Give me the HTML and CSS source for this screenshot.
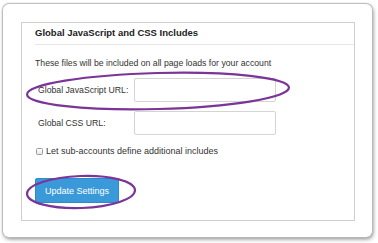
FILE: index.html
```html
<!DOCTYPE html>
<html lang="en">

<head>
    <meta charset="UTF-8">
    <title>Global Includes</title>
    <link rel="stylesheet" href="styles.css">
</head>

<body>
    <div class="card">
        <div class="panel">
            <div class="panel-title">Global JavaScript and CSS Includes</div>
            <p class="help">These files will be included on all page loads for your account</p>
            <div class="field">
                <label for="jsUrl">Global JavaScript URL:</label>
                <input type="text" id="jsUrl">
            </div>
            <div class="field">
                <label for="cssUrl">Global CSS URL:</label>
                <input type="text" id="cssUrl">
            </div>
            <label class="check"><input type="checkbox"> Let sub-accounts define additional includes</label>
            <button class="btn">Update Settings</button>
        </div>

        <!-- hand drawn highlights -->
        <svg class="marks" width="378" height="243" viewBox="0 0 378 243">
            <ellipse cx="158" cy="91" rx="131" ry="18" transform="rotate(-1.5 158 91)" />
            <ellipse cx="81" cy="192" rx="54" ry="16" transform="rotate(-2 81 192)" />
        </svg>
    </div>
</body>

</html>
```

FILE: styles.css
```css
body {
    margin: 0;
    background: #fff;
    font-family: 'Liberation Sans', Arial, sans-serif;
    color: #333;
}

.card {
    margin: 4px 6px 6px 3px;
    height: 233px;
    box-sizing: border-box;
    padding: 18px 17px 0 18px;
    background: #fff;
    border-radius: 6px;
    box-shadow: 0 0 1px 1px #bbb, 1px 2px 4px #888;
}

.panel {
    height: 199px;
    box-sizing: border-box;
    border: 1px solid #cfcfcf;
    padding-left: 13px;
}

.panel-title {
    font-size: 9.5px;
    font-weight: bold;
    color: #222;
    height: 21px;
    line-height: 20px;
    border-bottom: 1px solid #e6e6e6;
}

.help {
    font-size: 8.7px;
    margin: 13px 0 10px 0;
}

.field {
    display: flex;
    align-items: center;
    margin-bottom: 9px;
}

.field label {
    width: 96px;
    padding-left: 3px;
    font-size: 8.7px;
}

.field input {
    width: 142px;
    height: 24px;
    box-sizing: border-box;
    border: 1px solid #d4d4d4;
    border-radius: 2px;
    margin: 0;
}

.check {
    display: flex;
    align-items: center;
    gap: 3px;
    font-size: 9px;
    margin: 11px 0 22px 0;
}

.check input {
    appearance: none;
    width: 7px;
    height: 7px;
    margin: 0 0 0 1px;
    border: 1px solid #9a9a9a;
    border-radius: 1.5px;
    background: linear-gradient(#fff, #e8e8e8);
}

.btn {
    background: #3a9ad9;
    color: #fff;
    border: 1px solid #2f8acb;
    border-radius: 2px;
    font-family: inherit;
    font-size: 9px;
    width: 84px;
    height: 25px;
    padding: 0;
}

.marks {
    position: absolute;
    left: 0;
    top: 0;
    pointer-events: none;
}

.marks ellipse {
    fill: none;
    stroke: #7b3497;
    stroke-width: 2.2;
}
```
